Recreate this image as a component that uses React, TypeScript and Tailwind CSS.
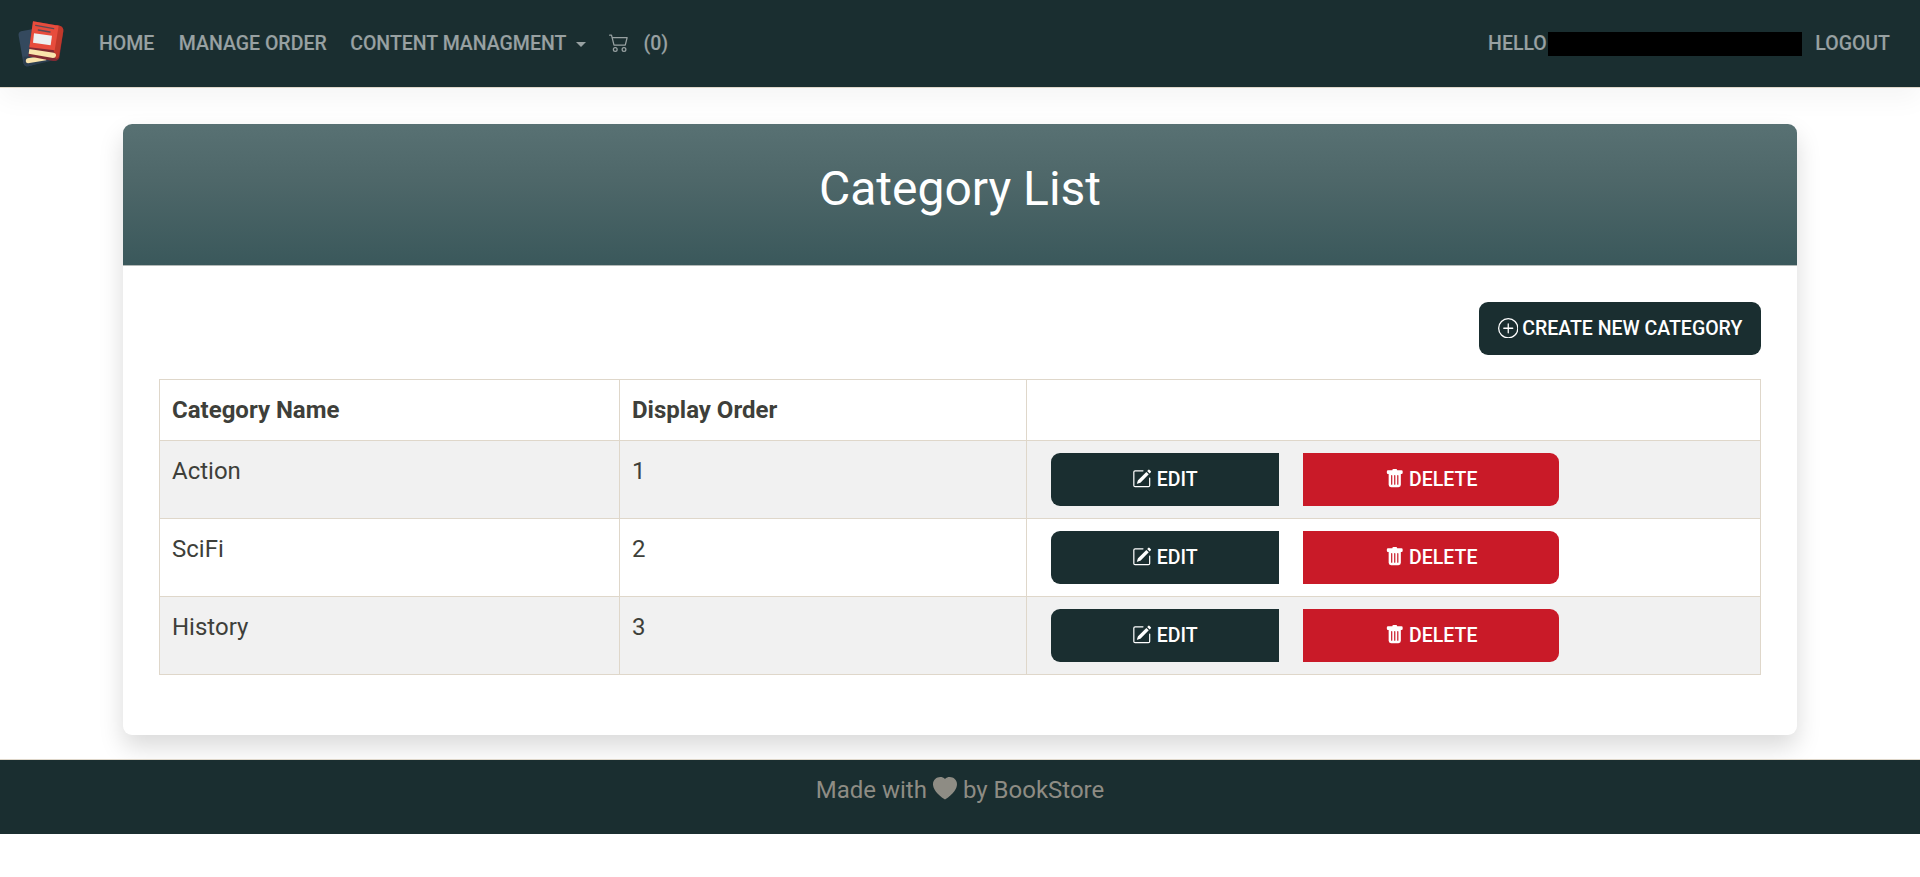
import { BsCart2, BsHeartFill, BsPencilSquare, BsPlusCircle, BsTrashFill } from "react-icons/bs";

const categories = [
  { name: "Action", order: 1 },
  { name: "SciFi", order: 2 },
  { name: "History", order: 3 },
];

function Logo() {
  return (
    <svg viewBox="50 62 144 144" className="mt-px h-12 w-12 shrink-0" aria-hidden="true">
      <path d="M62 96 L120 85 L150 182 L84 201 Q72 202 69 190L55 110 Q53 99 62 96Z" fill="#34495e" />
      <path d="M70 172 L140 168 L160 183 L84 201 Q72 202 69 190Z" fill="#2c3e50" />
      <path d="M82 177 L138 168 L138 183 L83 192 Q77 192 76 185 Q77 178 82 177Z" fill="#f9e4ac" />
      <path d="M98 66 L178 79 Q190 83 189 95 L177 176 Q172 187 158 185 L84 171Z" fill="#7f2a33" />
      <path d="M168 77 L178 79 Q190 83 189 95 L176 172 Q172 180 166 178 L160 152Z" fill="#c0392b" />
      <path d="M98 66 L175 79 L163 153 L87 144Z" fill="#e74c3c" />
      <path d="M87 149 L160 160 Q168 162 167 169 Q166 176 158 176 L85 163Z" fill="#f9e4ac" />
      <path d="M101 102 L155 109 L151 138 L98 130Z" fill="#ecf0f1" />
      <path d="M106 78 L160 88 M114 92 L149 98" stroke="#5b4a55" strokeWidth="4" strokeLinecap="round" />
    </svg>
  );
}

const navLink = "text-white/55";

export default function App() {
  return (
    <div className="min-h-[877px] bg-white font-['Roboto',sans-serif] text-[24px] leading-[36px] text-[#3e3f3a]">
      <header className="flex h-[88px] items-center justify-between border-b border-[#dfd7ca] bg-[#1a2e30] pr-[30px] pl-[17px] text-[19.5px] leading-[30px] font-medium uppercase shadow-[0_12px_24px_rgba(0,0,0,0.04)]">
        <nav className="flex items-center">
          <Logo />
          <a className={`ml-[34px] ${navLink}`}>Home</a>
          <a className={`ml-[24.5px] ${navLink}`}>Manage Order</a>
          <a className={`ml-[23.5px] flex items-center ${navLink}`}>
            Content Managment
            <span className="mt-px ml-[10px] border-x-[5px] border-t-[5px] border-x-transparent" />
          </a>
          <a className={`ml-[23px] flex items-center ${navLink}`}>
            <BsCart2 className="mr-[14px] mb-[3px] size-[20px]" />
            (0)
          </a>
        </nav>
        <div className="flex items-center">
          <span className={navLink}>Hello</span>
          <span className="ml-[1.5px] h-6 w-[254px] bg-black" />
          <a className={`ml-[13px] ${navLink}`}>Logout</a>
        </div>
      </header>

      <main className="mx-auto mt-9 h-[611px] w-[1674px] overflow-hidden rounded-[9px] bg-white shadow-[0_12px_24px_rgba(0,0,0,0.15)]">
        <div className="h-[142px] border-b border-[#b3b9b7] bg-[linear-gradient(180deg,#587173_0%,#4e6769_40%,#3a585b_100%)] pt-9 text-center">
          <h1 className="text-[48px] leading-[58px] text-white">Category List</h1>
        </div>
        <div className="px-9 pt-9">
          <div className="flex justify-end">
            <button className="flex h-[53px] w-[282px] items-center justify-center gap-1 rounded-[9px] bg-[#1a2e30] text-[19.5px] font-medium text-white uppercase">
              <BsPlusCircle className="mb-px size-[20.5px]" />
              Create New Category
            </button>
          </div>
          <table className="mt-6 w-[1602px] table-fixed border-collapse">
            <colgroup>
              <col className="w-[460px]" />
              <col className="w-[407px]" />
              <col />
            </colgroup>
            <thead>
              <tr className="h-[61px]">
                <th className="border border-[#dfd7ca] px-3 text-left font-bold">Category Name</th>
                <th className="border border-[#dfd7ca] px-3 text-left font-bold">Display Order</th>
                <th className="border border-[#dfd7ca]" />
              </tr>
            </thead>
            <tbody>
              {categories.map((c) => (
                <tr key={c.name} className="h-[78px] align-top odd:bg-[#f1f1f1]">
                  <td className="border border-[#dfd7ca] px-3 pt-3">{c.name}</td>
                  <td className="border border-[#dfd7ca] px-3 pt-3">{c.order}</td>
                  <td className="border border-[#dfd7ca] pt-3 pl-6">
                    <div className="flex gap-6 text-[19.5px] font-medium text-white">
                      <button className="flex h-[53px] w-[228px] items-center justify-center gap-[5px] rounded-l-[9px] bg-[#1a2e30] uppercase">
                        <BsPencilSquare className="mb-[2px] size-[19.5px]" />
                        Edit
                      </button>
                      <button className="flex h-[53px] w-[256px] items-center justify-center gap-[5px] rounded-r-[9px] bg-[#c91a28] uppercase">
                        <BsTrashFill className="mb-[2px] size-[19.5px]" />
                        Delete
                      </button>
                    </div>
                  </td>
                </tr>
              ))}
            </tbody>
          </table>
        </div>
      </main>

      <footer className="relative mt-6 flex h-[75px] justify-center border-t border-[#dfd7ca] bg-[#1a2e30] pt-3 text-[#8e8c84]">
        <span>Made with</span>
        <BsHeartFill className="mx-[6px] mt-[5px] size-6" />
        <span>by BookStore</span>
      </footer>
    </div>
  );
}
